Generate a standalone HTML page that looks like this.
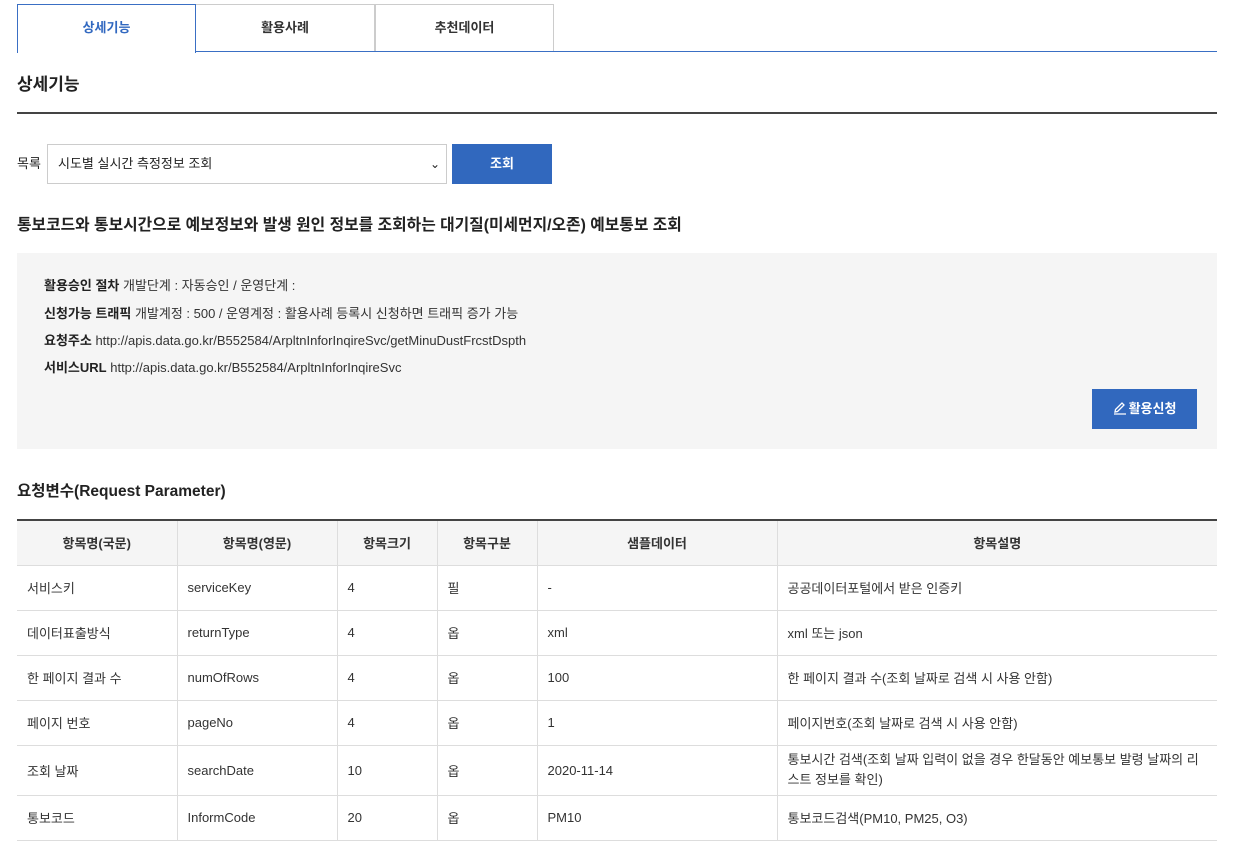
<!DOCTYPE html>
<html><head><meta charset="utf-8"><style>
*{box-sizing:border-box;margin:0;padding:0}
body{width:1252px;height:854px;background:#fff;font-family:"Liberation Sans","Noto Sans CJK KR",sans-serif;color:#222;position:relative;overflow:hidden}
.abs{position:absolute}
.tab{position:absolute;top:4px;height:48px;border:1px solid #ccc;border-bottom:none;text-align:center;line-height:46px;font-size:13px;font-weight:bold;color:#333;background:#fff}
table{position:absolute;left:17px;top:519px;width:1200px;border-collapse:collapse;border-top:2px solid #444;font-size:13px;color:#333}
td,th{border:1px solid #ddd;padding:0 10px;text-align:left}
th{background:#f5f5f5;height:45px;text-align:center;font-weight:bold;border-top:none}
td{height:45px}
tr td:first-child,tr th:first-child{border-left:none}
tr td:last-child,tr th:last-child{border-right:none}
.info{font-size:13px;color:#333;position:absolute;left:44px}
.info b{color:#222}
</style></head><body>
<div class="abs" style="left:196px;top:51px;width:1021px;height:1px;background:#3a6fc4"></div>
<div class="tab" style="left:196px;width:179px;border-left:none;height:47px">활용사례</div>
<div class="tab" style="left:375px;width:179px;height:47px">추천데이터</div>
<div class="tab" style="left:17px;width:179px;border-color:#3a6fc4;color:#3168c0;height:49px;z-index:2">상세기능</div>
<div class="abs" style="left:17px;top:70px;font-size:17px;font-weight:bold;color:#222">상세기능</div>
<div class="abs" style="left:17px;top:112px;width:1200px;height:2px;background:#444"></div>
<div class="abs" style="left:17px;top:153px;font-size:13px">목록</div>
<div class="abs" style="left:47px;top:144px;width:400px;height:40px;border:1px solid #ccc;font-size:13px;line-height:38px;padding-left:10px">시도별 실시간 측정정보 조회<span style="position:absolute;right:6px;top:0;font-size:12px">⌄</span></div>
<div class="abs" style="left:452px;top:144px;width:100px;height:40px;background:#3168be;color:#fff;font-weight:bold;font-size:13px;text-align:center;line-height:40px">조회</div>
<div class="abs" style="left:17px;top:212px;font-size:15.8px;font-weight:bold;color:#222">통보코드와 통보시간으로 예보정보와 발생 원인 정보를 조회하는 대기질(미세먼지/오존) 예보통보 조회</div>
<div class="abs" style="left:17px;top:253px;width:1200px;height:196px;background:#f5f5f5"></div>
<div class="info" style="top:275px"><b>활용승인 절차</b> 개발단계 : 자동승인 / 운영단계 :</div>
<div class="info" style="top:303px"><b>신청가능 트래픽</b> 개발계정 : 500 / 운영계정 : 활용사례 등록시 신청하면 트래픽 증가 가능</div>
<div class="info" style="top:330px"><b>요청주소</b> http://apis.data.go.kr/B552584/ArpltnInforInqireSvc/getMinuDustFrcstDspth</div>
<div class="info" style="top:357px"><b>서비스URL</b> http://apis.data.go.kr/B552584/ArpltnInforInqireSvc</div>
<div class="abs" style="left:1092px;top:389px;width:105px;height:40px;background:#3168be;color:#fff;font-weight:bold;font-size:13px;text-align:center;line-height:40px"><svg width="14" height="14" viewBox="0 0 14 14" style="vertical-align:-2px;margin-right:2px"><path d="M2 11 L2.5 8.5 L9 2 L11 4 L4.5 10.5 Z M1 13 H13" fill="none" stroke="#fff" stroke-width="1.3"/></svg>활용신청</div>
<div class="abs" style="left:17px;top:479px;font-size:15.5px;font-weight:bold;color:#222">요청변수(Request Parameter)</div>
<table>
<tr><th style="width:160px">항목명(국문)</th><th style="width:160px">항목명(영문)</th><th style="width:100px">항목크기</th><th style="width:100px">항목구분</th><th style="width:240px">샘플데이터</th><th>항목설명</th></tr>
<tr><td>서비스키</td><td>serviceKey</td><td>4</td><td>필</td><td>-</td><td>공공데이터포털에서 받은 인증키</td></tr>
<tr><td>데이터표출방식</td><td>returnType</td><td>4</td><td>옵</td><td>xml</td><td>xml 또는 json</td></tr>
<tr><td>한 페이지 결과 수</td><td>numOfRows</td><td>4</td><td>옵</td><td>100</td><td>한 페이지 결과 수(조회 날짜로 검색 시 사용 안함)</td></tr>
<tr><td>페이지 번호</td><td>pageNo</td><td>4</td><td>옵</td><td>1</td><td>페이지번호(조회 날짜로 검색 시 사용 안함)</td></tr>
<tr><td style="height:50px">조회 날짜</td><td>searchDate</td><td>10</td><td>옵</td><td>2020-11-14</td><td style="line-height:20px">통보시간 검색(조회 날짜 입력이 없을 경우 한달동안 예보통보 발령 날짜의 리스트 정보를 확인)</td></tr>
<tr><td>통보코드</td><td>InformCode</td><td>20</td><td>옵</td><td>PM10</td><td>통보코드검색(PM10, PM25, O3)</td></tr>
</table>
</body></html>
